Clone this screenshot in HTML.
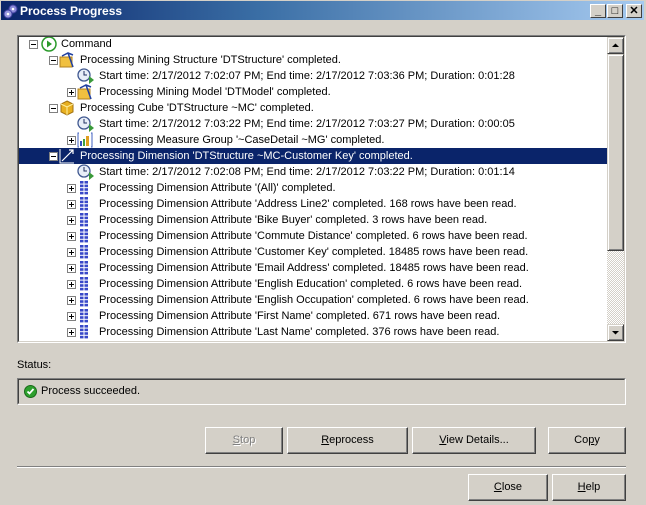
<!DOCTYPE html>
<html><head><style>
*{margin:0;padding:0;box-sizing:border-box}
body{width:646px;height:505px;background:#d4d0c8;font-family:"Liberation Sans",sans-serif;font-size:11px;color:#000;position:relative;overflow:hidden}
.abs{position:absolute}
#title{left:1px;top:1px;width:643px;height:19px;background:linear-gradient(to right,#0a246a,#3a6ea5 40%,#a6caf0)}
#title span{position:absolute;left:19px;top:3px;color:#fff;font-weight:bold;font-size:12px}
.tb{position:absolute;top:3px;width:16px;height:14px;background:#d4d0c8;border:1px solid;border-color:#fff #404040 #404040 #fff;font-size:11px;font-weight:bold;text-align:center;line-height:12px}
#tree{left:17px;top:35px;width:609px;height:308px;border:1px solid;border-color:#808080 #fff #fff #808080;background:#fff}
#tree .in{position:absolute;left:0;top:0;right:0;bottom:0;border:1px solid;border-color:#404040 #d4d0c8 #d4d0c8 #404040;overflow:hidden}
.row{position:absolute;height:16px;line-height:16px;white-space:nowrap;left:0;right:17px}
.row .t{position:absolute;top:0}
.box{position:absolute;top:4px;width:9px;height:9px;border:1px solid #808080;background:#fff}
.box:before{content:"";position:absolute;left:1px;top:3px;width:5px;height:1px;background:#000}
.plus:after{content:"";position:absolute;left:3px;top:1px;width:1px;height:5px;background:#000}
.ic{position:absolute;top:0}
.sel{background:#0a246a;color:#fff}
#sb{position:absolute;right:0;top:0;width:17px;bottom:0;background:repeating-conic-gradient(#d4d0c8 0 25%,#fff 0 50%) 0 0/2px 2px}
.sbb{position:absolute;left:0;width:17px;height:17px;background:#d4d0c8;border:1px solid;border-color:#d4d0c8 #404040 #404040 #d4d0c8;box-shadow:inset 1px 1px #fff,inset -1px -1px #808080}
.btn{position:absolute;height:27px;background:#d4d0c8;border:1px solid;border-color:#fff #404040 #404040 #fff;box-shadow:inset -1px -1px #808080;text-align:center;line-height:25px;font-size:11px}
</style></head><body>
<div id="title" class="abs">
<svg class="abs" style="left:2px;top:2px" width="16" height="16"><circle cx="10" cy="6" r="4" fill="#8a8ad8" stroke="#4040a0"/><circle cx="5" cy="11" r="4" fill="#9a9ae0" stroke="#4040a0"/><circle cx="10" cy="6" r="1.3" fill="#fff"/><circle cx="5" cy="11" r="1.3" fill="#fff"/></svg>
<span>Process Progress</span>
<div class="tb" style="left:589px">_</div>
<div class="tb" style="left:606px">□</div>
<div class="tb" style="left:625px">✕</div>
</div>

<div id="tree" class="abs"><div class="in">
<div id="rows"></div>
<div id="sb">
<div class="sbb" style="top:0"><svg width="15" height="15"><path d="M4 9h7L7.5 5.5z" fill="#000"/></svg></div>
<div class="sbb" style="top:17px;height:197px"></div>
<div class="sbb" style="bottom:0"><svg width="15" height="15"><path d="M4 6h7L7.5 9.5z" fill="#000"/></svg></div>
</div>
</div></div>

<div class="abs" style="left:17px;top:359px">Status:</div>
<div class="abs" style="left:17px;top:378px;width:609px;height:27px;border:1px solid;border-color:#808080 #fff #fff #808080;"><div style="position:absolute;inset:0;border:1px solid;border-color:#404040 #d4d0c8 #d4d0c8 #404040"></div>
<svg class="abs" style="left:6px;top:6px" width="13" height="13"><circle cx="6.5" cy="6.5" r="6" fill="#2ea02e" stroke="#1a6a1a"/><path d="M3.5 6.5l2 2 4-4.5" stroke="#fff" stroke-width="1.8" fill="none"/></svg>
<span class="abs" style="left:23px;top:6px">Process succeeded.</span></div>

<div class="btn" style="left:205px;top:427px;width:78px;color:#808080;text-shadow:1px 1px #fff"><u>S</u>top</div>
<div class="btn" style="left:287px;top:427px;width:121px"><u>R</u>eprocess</div>
<div class="btn" style="left:412px;top:427px;width:124px"><u>V</u>iew Details...</div>
<div class="btn" style="left:548px;top:427px;width:78px">Co<u>p</u>y</div>
<div class="abs" style="left:17px;top:466px;width:609px;height:2px;border-top:1px solid #808080;border-bottom:1px solid #fff"></div>
<div class="btn" style="left:468px;top:474px;width:80px"><u>C</u>lose</div>
<div class="btn" style="left:552px;top:474px;width:74px"><u>H</u>elp</div>

<script>
var I={
cmd:'<svg width="16" height="16"><circle cx="8" cy="8" r="7" fill="#fff" stroke="#2a9a2a" stroke-width="1.5"/><path d="M6 4.5v7l5-3.5z" fill="#2a9a2a"/></svg>',
min:'<svg width="16" height="16"><rect x="1" y="5" width="12" height="10" fill="#f0c040" stroke="#b08020"/><path d="M3 4l6-3 5 2M9 1l5 14" stroke="#2040a0" stroke-width="1.5" fill="none"/></svg>',
clk:'<svg width="18" height="16"><circle cx="7" cy="7" r="6" fill="#e8eef8" stroke="#405890" stroke-width="1.3"/><path d="M7 3v4h3" stroke="#203060" fill="none"/><path d="M12 8v8l5-4z" fill="#3a9a3a"/></svg>',
cube:'<svg width="16" height="16"><path d="M8 1l6 3v8l-6 3-6-3V4z" fill="#e8b020" stroke="#a07010"/><path d="M2 4l6 3 6-3M8 7v8" stroke="#fff0a0" fill="none"/></svg>',
mg:'<svg width="16" height="16"><path d="M2 1H1v14h1M14 1h1v14h-1" stroke="#4060c0" fill="none"/><rect x="3" y="9" width="2" height="5" fill="#3050c0"/><rect x="6" y="7" width="2" height="7" fill="#40a040"/><rect x="9" y="4" width="3" height="10" fill="#e0a020"/></svg>',
dim:'<svg width="16" height="16"><path d="M1 1v14h14" stroke="#fff" fill="none"/><path d="M3 13L14 2M10 2h4v4" stroke="#fff" stroke-width="1.2" fill="none"/></svg>',
att:'<svg width="16" height="16"><g fill="#3848c8"><rect x="3" y="1" width="3.5" height="2.6"/><rect x="7.5" y="1" width="3.5" height="2.6"/><rect x="3" y="4.6" width="3.5" height="2.6"/><rect x="7.5" y="4.6" width="3.5" height="2.6"/><rect x="3" y="8.2" width="3.5" height="2.6"/><rect x="7.5" y="8.2" width="3.5" height="2.6"/><rect x="3" y="11.8" width="3.5" height="2.6"/><rect x="7.5" y="11.8" width="3.5" height="2.6"/></g></svg>'};
var R=[
[0,'m','cmd','Command'],
[1,'m','min',"Processing Mining Structure 'DTStructure' completed."],
[2,'','clk',"Start time: 2/17/2012 7:02:07 PM; End time: 2/17/2012 7:03:36 PM; Duration: 0:01:28"],
[2,'p','min',"Processing Mining Model 'DTModel' completed."],
[1,'m','cube',"Processing Cube 'DTStructure ~MC' completed."],
[2,'','clk',"Start time: 2/17/2012 7:03:22 PM; End time: 2/17/2012 7:03:27 PM; Duration: 0:00:05"],
[2,'p','mg',"Processing Measure Group '~CaseDetail ~MG' completed."],
[1,'m','dim',"Processing Dimension 'DTStructure ~MC-Customer Key' completed.",1],
[2,'','clk',"Start time: 2/17/2012 7:02:08 PM; End time: 2/17/2012 7:03:22 PM; Duration: 0:01:14"]];
["'(All)' completed.","'Address Line2' completed. 168 rows have been read.","'Bike Buyer' completed. 3 rows have been read.","'Commute Distance' completed. 6 rows have been read.","'Customer Key' completed. 18485 rows have been read.","'Email Address' completed. 18485 rows have been read.","'English Education' completed. 6 rows have been read.","'English Occupation' completed. 6 rows have been read.","'First Name' completed. 671 rows have been read.","'Last Name' completed. 376 rows have been read."].forEach(function(s){R.push([2,'p','att','Processing Dimension Attribute '+s])});
var h='',bx=[10,30,48],ix=[22,40,58],tx=[42,61,80];
R.forEach(function(r,i){var y=-1+16*i,l=r[0];
h+='<div class="row" style="top:'+y+'px">';
if(r[4])h+='<div class="sel" style="position:absolute;left:0;right:0;top:0;height:16px"></div>';
if(r[1])h+='<div class="box'+(r[1]=='p'?' plus':'')+'" style="left:'+bx[l]+'px"></div>';
h+='<div class="ic" style="left:'+ix[l]+'px">'+I[r[2]]+'</div>';
h+='<div class="t" style="left:'+tx[l]+'px'+(r[4]?';color:#fff':'')+'">'+r[3]+'</div></div>';});
document.getElementById('rows').innerHTML=h;
</script>
</body></html>
